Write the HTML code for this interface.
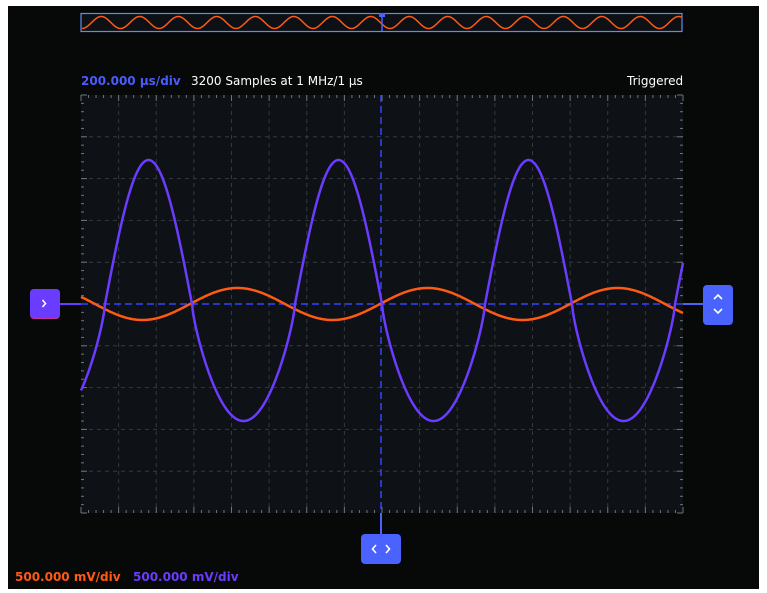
<!DOCTYPE html>
<html><head><meta charset="utf-8"><style>
html,body{margin:0;padding:0;background:#fff;width:767px;height:593px;overflow:hidden}
#p{position:absolute;left:8px;top:6px;width:751px;height:583px;background:#070808}
.t{position:absolute;font-family:"DejaVu Sans","Liberation Sans",sans-serif;font-size:12px;white-space:nowrap}
svg{position:absolute;left:0;top:0}
</style></head><body>
<div id="p"></div>
<svg id="s" width="767" height="593" viewBox="0 0 767 593"></svg>
<div class="t" style="left:81px;top:74px;color:#4a5cff;font-weight:bold">200.000 µs/div</div>
<div class="t" style="left:191px;top:74px;color:#fff">3200 Samples at 1 MHz/1 µs</div>
<div class="t" style="left:627px;top:74px;color:#fff">Triggered</div>
<div class="t" style="left:15px;top:570px;color:#ff5a14;font-weight:bold">500.000 mV/div</div>
<div class="t" style="left:133px;top:570px;color:#6a3cff;font-weight:bold">500.000 mV/div</div>
<script>
var s='';
s+='<rect x="81" y="13.5" width="601" height="18" fill="#0d1014" stroke="#5b8fe8" stroke-width="1.2"/>';
var d='';for(var x=82;x<=682;x++){var y=22.5+6*Math.cos(2*Math.PI*(x-82)/38.5);d+=(x==82?'M':'L')+x+' '+y.toFixed(2);}
s+='<path d="'+d+'" fill="none" stroke="#ff5a14" stroke-width="1.5"/>';
s+='<rect x="379" y="13" width="6" height="4" fill="#4a63ff"/><line x1="382" y1="13" x2="382" y2="31" stroke="#4a63ff" stroke-width="1.5"/>';
s+='<rect x="81" y="95" width="602" height="418" fill="#0e1115"/>';
for(var i=1;i<16;i++){var gx=81+i*37.625;if(i==8)continue;s+='<line x1="'+gx+'" y1="95" x2="'+gx+'" y2="513" stroke="#353a3f" stroke-dasharray="4,4" stroke-width="1"/>';}
for(var j=1;j<10;j++){var gy=95+j*41.8;if(j==5)continue;s+='<line x1="81" y1="'+gy+'" x2="683" y2="'+gy+'" stroke="#353a3f" stroke-dasharray="4,4" stroke-width="1"/>';}
for(var k=0;k<=80;k++){var tx=81+k*7.525;var L=(k%5==0)?6:3;s+='<line x1="'+tx+'" y1="95" x2="'+tx+'" y2="'+(95+L)+'" stroke="#6d767e"/><line x1="'+tx+'" y1="513" x2="'+tx+'" y2="'+(513-L)+'" stroke="#6d767e"/>';}
for(var k=0;k<=50;k++){var ty=95+k*8.36;var L=(k%5==0)?6:3;s+='<line x1="81" y1="'+ty+'" x2="'+(81+L)+'" y2="'+ty+'" stroke="#6d767e"/><line x1="683" y1="'+ty+'" x2="'+(683-L)+'" y2="'+ty+'" stroke="#6d767e"/>';}
s+='<line x1="81" y1="304" x2="683" y2="304" stroke="#2f45ff" stroke-width="1.5" stroke-dasharray="7,4"/>';
s+='<line x1="381" y1="95" x2="381" y2="513" stroke="#2f45ff" stroke-width="1.5" stroke-dasharray="7,4"/>';
s+='<line x1="59" y1="304" x2="81" y2="304" stroke="#6a3cff" stroke-width="2"/>';
s+='<line x1="683" y1="304" x2="705" y2="304" stroke="#4a63ff" stroke-width="2"/>';
s+='<line x1="381" y1="513" x2="381" y2="535" stroke="#4a63ff" stroke-width="2"/>';
d='';for(var x=81;x<=683;x++){var y=304-16*Math.sin(2*Math.PI*(x-190)/190);d+=(x==81?'M':'L')+x+' '+y.toFixed(2);}
s+='<path d="'+d+'" fill="none" stroke="#ff5a14" stroke-width="2.5"/>';
// purple piecewise
d='';for(var x=81;x<=683;x++){var t=((x-105)%190+190)%190;var y;
 if(t<87){var v=Math.sin(Math.PI*t/87);y=304-144*v;}
 else{var v=Math.sin(Math.PI*(t-87)/103);y=304+117*Math.pow(v,0.75);}
 d+=(x==81?'M':'L')+x+' '+y.toFixed(2);}
s+='<path d="'+d+'" fill="none" stroke="#6a3cff" stroke-width="2.5"/>';
s+='<rect x="30" y="289" width="30" height="30" rx="4" fill="#c5309a"/><rect x="30" y="289" width="30" height="29" rx="4" fill="#6a3cff"/><path d="M42.5 300l3 3.5-3 3.5" fill="none" stroke="#fff" stroke-width="1.6"/>';
s+='<rect x="703" y="285" width="30" height="40" rx="4" fill="#4a63ff"/><path d="M714 299l4-4 4 4M714 309l4 4 4-4" fill="none" stroke="#fff" stroke-width="1.6"/>';
s+='<rect x="361" y="534" width="40" height="30" rx="4" fill="#4a63ff"/><path d="M376 545l-3.5 4 3.5 4M386 545l3.5 4-3.5 4" fill="none" stroke="#fff" stroke-width="1.6"/>';
document.getElementById('s').innerHTML=s;
</script>
</body></html>
